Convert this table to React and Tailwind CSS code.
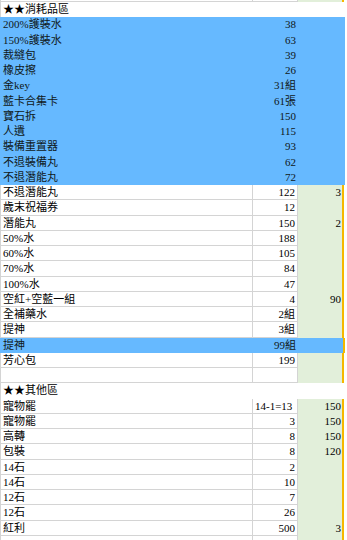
import React from "react";

// row kinds: head = section title, blue = highlighted, cell = normal white/green row
const rows = [
  { kind: "head", a: "★★消耗品區" },
  { kind: "blue", a: "200%護裝水", b: "38" },
  { kind: "blue", a: "150%護裝水", b: "63" },
  { kind: "blue", a: "裁縫包", b: "39" },
  { kind: "blue", a: "橡皮擦", b: "26" },
  { kind: "blue", a: "金key", b: "31組" },
  { kind: "blue", a: "藍卡合集卡", b: "61張" },
  { kind: "blue", a: "寶石拆", b: "150" },
  { kind: "blue", a: "人遺", b: "115" },
  { kind: "blue", a: "裝備重置器", b: "93" },
  { kind: "blue", a: "不退裝備丸", b: "62" },
  { kind: "blue", a: "不退潛能丸", b: "72" },
  { kind: "cell", a: "不退潛能丸", b: "122", c: "3" },
  { kind: "cell", a: "歲末祝福券", b: "12" },
  { kind: "cell", a: "潛能丸", b: "150", c: "2" },
  { kind: "cell", a: "50%水", b: "188" },
  { kind: "cell", a: "60%水", b: "105" },
  { kind: "cell", a: "70%水", b: "84" },
  { kind: "cell", a: "100%水", b: "47" },
  { kind: "cell", a: "空紅+空藍一組", b: "4", c: "90" },
  { kind: "cell", a: "全補藥水", b: "2組" },
  { kind: "cell", a: "提神", b: "3組" },
  { kind: "blue", a: "提神", b: "99組", edge: true },
  { kind: "cell", a: "芳心包", b: "199" },
  { kind: "cell", a: "", b: "" },
  { kind: "head", a: "★★其他區" },
  { kind: "cell", a: "寵物罷", b: "14-1=13", left: true, c: "150" },
  { kind: "cell", a: "寵物罷", b: "3", c: "150" },
  { kind: "cell", a: "高轉", b: "8", c: "150" },
  { kind: "cell", a: "包裝", b: "8", c: "120" },
  { kind: "cell", a: "14石", b: "2" },
  { kind: "cell", a: "14石", b: "10" },
  { kind: "cell", a: "12石", b: "7" },
  { kind: "cell", a: "12石", b: "26" },
  { kind: "cell", a: "紅利", b: "500", c: "3" },
  { kind: "cell", a: "", b: "" },
];

const Row = function ({ row }) {
  if (row.kind === "head") {
    return (
      <div className="flex h-[15.25px] bg-white border-l border-[#d4d4d4]">
        <div className="pl-[2px] leading-[15px] text-black">{row.a}</div>
      </div>
    );
  }
  if (row.kind === "blue") {
    return (
      <div className="flex h-[15.25px] bg-[#66b9ff] text-[#101820]">
        <div className="w-[253px] pl-[3px] leading-[15px] truncate">{row.a}</div>
        <div className="w-[45px] pr-[2px] text-right leading-[15px]">{row.b}</div>
        <div className="w-[45px]"></div>
        {row.edge ? <div className="w-[2px] bg-[#f5b800]"></div> : <div className="w-[2px]"></div>}
        <div className="flex-1 bg-white"></div>
      </div>
    );
  }
  return (
    <div className="flex h-[15.25px] bg-white text-black">
      <div className="w-[253px] pl-[2px] leading-[15px] border-l border-b border-r border-[#d4d4d4] truncate">{row.a}</div>
      <div className={"w-[45px] leading-[15px] border-b border-r border-[#d4d4d4] " + (row.left ? "pl-[2px] text-left" : "pr-[2px] text-right")}>{row.b}</div>
      <div className="w-[44px] bg-[#e2efda] pr-[1px] text-right leading-[15px]">{row.c}</div>
      <div className="w-[2px] bg-[#f5b800]"></div>
      <div className="flex-1 bg-white"></div>
    </div>
  );
};

export default function App() {
  return (
    <div
      className="w-[347px] h-[540px] overflow-hidden bg-white text-[11px]"
      style={{ fontFamily: '"Liberation Serif", "Noto Sans CJK TC", serif' }}
    >
      <div className="flex h-[2px]">
        <div className="w-[253px] border-l border-r border-b border-[#d4d4d4]"></div>
        <div className="w-[45px] border-r border-b border-[#d4d4d4]"></div>
        <div className="w-[44px] bg-[#e2efda]"></div>
        <div className="w-[2px] bg-[#f5b800]"></div>
        <div className="flex-1"></div>
      </div>
      {rows.map(function (row, i) {
        return <Row key={i} row={row} />;
      })}
    </div>
  );
}
